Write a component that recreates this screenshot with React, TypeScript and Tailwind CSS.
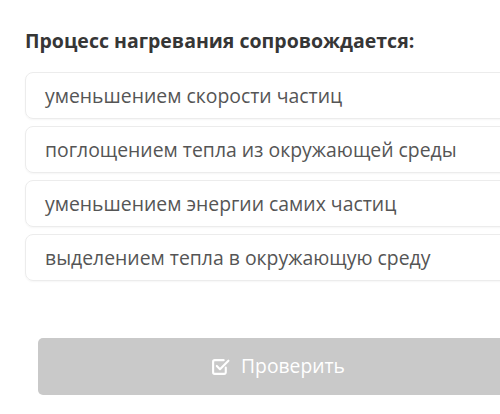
import React from "react";

const options = [
  "уменьшением скорости частиц",
  "поглощением тепла из окружающей среды",
  "уменьшением энергии самих частиц",
  "выделением тепла в окружающую среду",
];

export default function App() {
  return (
    <div className="w-[500px] h-[414px] overflow-hidden bg-white" style={{ fontFamily: '"Open Sans", sans-serif' }}>
      <div className="w-[518px] pl-[25px] pt-[27px]">
        <h1 className="text-[19.5px] leading-[28px] font-bold text-[#363636]">Процесс нагревания сопровождается:</h1>
        <div className="mt-[17px] flex flex-col gap-[7px]">
          {options.map((o) => (
            <div
              key={o}
              className="h-[47px] flex items-center pl-[19px] rounded-[8px] border border-[#ececec] shadow-[0_1px_2px_rgba(0,0,0,0.04)] text-[19.4px] text-[#555555]"
            >
              {o}
            </div>
          ))}
        </div>
        <div className="mt-[57px] ml-[13px] h-[57px] rounded-[5px] bg-[#c9c9c9] flex items-center justify-center gap-[11px] text-white text-[19.3px]">
          <svg width="19" height="19" viewBox="0 0 18 18" fill="none" stroke="white" strokeWidth="2" strokeLinecap="round" strokeLinejoin="round">
            <path d="M14 10V14.5a1.5 1.5 0 0 1-1.5 1.5h-9A1.5 1.5 0 0 1 2 14.5v-10A1.5 1.5 0 0 1 3.5 3H12" />
            <path d="M5.5 8.5l3 3L16.5 3.5" />
          </svg>
          <span>Проверить</span>
        </div>
      </div>
    </div>
  );
}
